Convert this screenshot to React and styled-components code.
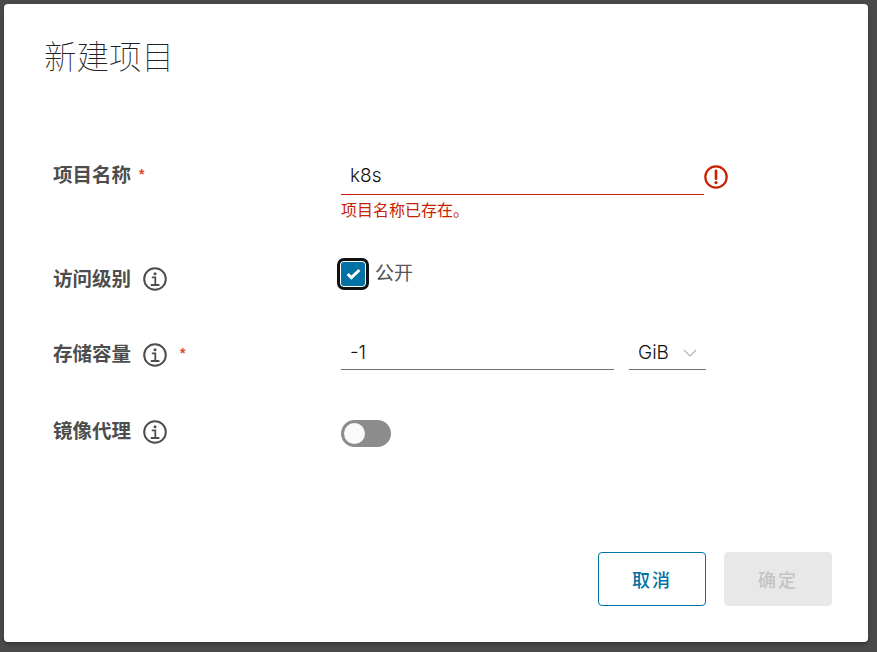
import React from 'react';
import styled, { createGlobalStyle } from 'styled-components';

const GlobalStyle = createGlobalStyle`
  html, body {
    margin: 0;
    height: 100%;
    background-color: #4a4a4a;
    font-family: "Inter", "Noto Sans CJK SC", sans-serif;
  }
`;

const Backdrop = styled.div`
  width: 877px;
  height: 652px;
  padding: 4px 9px 10px 4px;
  box-sizing: border-box;
  background-color: #4a4a4a;
  overflow: hidden;
`;

const Modal = styled.div`
  width: 864px;
  height: 638px;
  background-color: #fff;
  border-radius: 4px;
  box-shadow: 0 2px 4px rgba(0, 0, 0, 0.3);
  display: flex;
  flex-direction: column;
  padding: 30px 36px 36px 40px;
  box-sizing: border-box;
`;

const Title = styled.h3`
  margin: 0;
  font-family: "Noto Sans CJK SC", sans-serif;
  font-size: 32.5px;
  font-weight: 100;
  line-height: 42px;
  color: #222;
`;

const Form = styled.div`
  margin-top: 83px;
  padding-left: 9px;
  flex: 1;
  display: flex;
  flex-direction: column;
`;

const Row = styled.div`
  display: grid;
  grid-template-columns: 288px 1fr;
  height: ${props => props.$height}px;
`;

const Label = styled.div`
  display: flex;
  align-items: flex-start;
  padding-top: 3px;
  font-family: "Noto Sans CJK SC", sans-serif;
  font-size: 19.5px;
  font-weight: 700;
  line-height: 24px;
  color: #4d4d4d;
`;

const Required = styled.span`
  margin-left: ${props => props.$gap}px;
  color: #e0452a;
  font-size: 14px;
  font-weight: 700;
  font-family: "Liberation Sans", sans-serif;
`;

const InfoWrap = styled.span`
  margin-left: 12px;
  margin-top: ${props => props.$top}px;
  width: 24px;
  height: 24px;
  display: block;
`;

const InputLine = styled.div`
  width: ${props => props.$width}px;
  height: ${props => props.$height}px;
  box-sizing: border-box;
  border-bottom: 1px solid ${props => (props.$error ? '#c92100' : '#6a7177')};
  padding-left: ${props => props.$indent}px;
  padding-bottom: 2px;
  display: flex;
  align-items: center;
  justify-content: ${props => (props.$between ? 'space-between' : 'flex-start')};
  font-size: 19px;
  font-weight: 300;
  line-height: 24px;
  color: #111;
`;

const InputRow = styled.div`
  display: flex;
  align-items: flex-start;
`;

const ErrorIcon = styled.svg`
  width: 26px;
  height: 26px;
  margin-left: -1px;
  margin-top: 5px;
`;

const ErrorText = styled.div`
  margin-top: 4px;
  font-family: "Noto Sans CJK SC", sans-serif;
  font-size: 16px;
  line-height: 20px;
  color: #c92100;
`;

const CheckRow = styled.div`
  display: flex;
  align-items: center;
  align-self: start;
  margin-top: -5px;
  margin-left: -4px;
`;

const Checkbox = styled.span`
  width: 32px;
  height: 32px;
  box-sizing: border-box;
  border: 3px solid #111;
  border-radius: 7px;
  background-color: #0072a3;
  box-shadow: inset 0 0 0 1px #fff;
  display: flex;
  align-items: center;
  justify-content: center;
`;

const CheckText = styled.span`
  margin-left: 6px;
  margin-top: -4px;
  font-family: "Noto Sans CJK SC", sans-serif;
  font-size: 19px;
  line-height: 24px;
  color: #565656;
`;

const Chevron = styled.svg`
  width: 14px;
  height: 8px;
  margin-right: 9px;
`;

const Storage = styled.div`
  display: flex;
  gap: 15px;
`;

const Switch = styled.div`
  width: 50px;
  height: 27px;
  margin-top: 5px;
  border-radius: 14px;
  background-color: #8c8c8c;
  box-sizing: border-box;
  padding: 3px;
`;

const Knob = styled.div`
  width: 21px;
  height: 21px;
  border-radius: 50%;
  background-color: #fafafa;
`;

const Footer = styled.div`
  display: flex;
  justify-content: flex-end;
  gap: 18px;
`;

const Button = styled.button`
  width: 108px;
  height: 54px;
  box-sizing: border-box;
  border-radius: 4px;
  border: 1px solid ${props => (props.disabled ? '#e8e8e8' : '#0072a3')};
  background-color: ${props => (props.disabled ? '#e8e8e8' : '#fff')};
  color: ${props => (props.disabled ? '#c4c4c4' : '#0072a3')};
  font-family: "Noto Sans CJK SC", sans-serif;
  font-size: 18px;
  font-weight: 500;
  letter-spacing: 2px;
  padding: 0;
`;

const InfoIcon = ({ top = 1 }) => (
  <InfoWrap $top={top}>
    <svg width="24" height="24" viewBox="0 0 24 24" fill="none" stroke="#4d4d4d" strokeWidth="2">
      <circle cx="12" cy="12" r="10.8" />
      <path d="M8.8 10.4h3.5v7.6M7.8 18h8.6" strokeWidth="1.8" />
      <circle cx="12" cy="6.8" r="1.5" fill="#4d4d4d" stroke="none" />
    </svg>
  </InfoWrap>
);

const App = () => (
  <Backdrop>
    <GlobalStyle />
    <Modal>
      <Title>新建项目</Title>
      <Form>
        <Row $height={104}>
          <Label>
            项目名称<Required $gap={8}>*</Required>
          </Label>
          <div>
            <InputRow>
              <InputLine $width={363} $height={36} $indent={9} $error>k8s</InputLine>
              <ErrorIcon viewBox="0 0 26 26" fill="none">
                <circle cx="13" cy="13" r="10.7" stroke="#c92100" strokeWidth="2.2" />
                <path d="M13 6.8v8" stroke="#c92100" strokeWidth="2.6" strokeLinecap="round" />
                <circle cx="13" cy="18.6" r="1.6" fill="#c92100" />
              </ErrorIcon>
            </InputRow>
            <ErrorText>项目名称已存在。</ErrorText>
          </div>
        </Row>
        <Row $height={75}>
          <Label>
            访问级别<InfoIcon />
          </Label>
          <CheckRow>
            <Checkbox>
              <svg width="15" height="12" viewBox="0 0 15 12" fill="none">
                <path d="M1.6 6l3.8 3.6 8-7.6" stroke="#fff" strokeWidth="3" />
              </svg>
            </Checkbox>
            <CheckText>公开</CheckText>
          </CheckRow>
        </Row>
        <Row $height={77}>
          <Label>
            存储容量<InfoIcon top={2} /><Required $gap={13}>*</Required>
          </Label>
          <Storage>
            <InputLine $width={273} $height={32} $indent={9}>-1</InputLine>
            <InputLine $width={77} $height={32} $indent={9} $between>
              GiB
              <Chevron viewBox="0 0 14 8" fill="none">
                <path d="M1 1l6 6 6-6" stroke="#b3b3b3" strokeWidth="1.2" />
              </Chevron>
            </InputLine>
          </Storage>
        </Row>
        <Row $height={78}>
          <Label>
            镜像代理<InfoIcon top={2} />
          </Label>
          <div>
            <Switch><Knob /></Switch>
          </div>
        </Row>
      </Form>
      <Footer>
        <Button>取消</Button>
        <Button disabled>确定</Button>
      </Footer>
    </Modal>
  </Backdrop>
);

export default App;
